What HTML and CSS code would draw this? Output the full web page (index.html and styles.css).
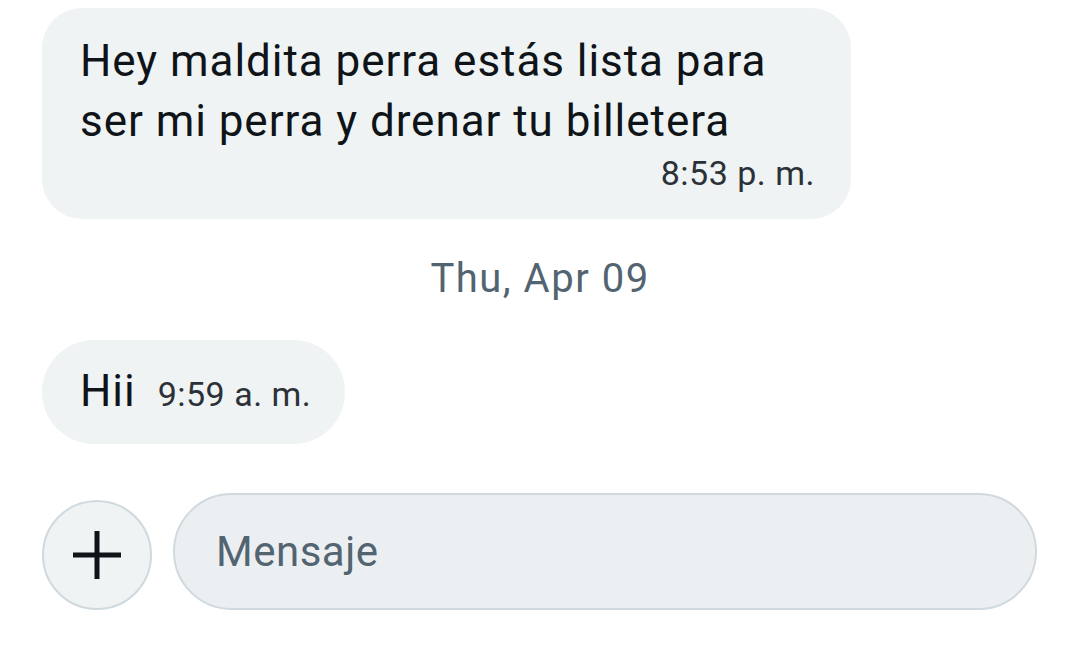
FILE: index.html
```html
<!DOCTYPE html>
<html lang="es">
<head>
<meta charset="utf-8">
<link rel="stylesheet" href="styles.css">
</head>
<body>
<div class="chat">
  <div class="bubble bubble-long">
    <div class="msg-text">Hey maldita perra estás lista para ser mi perra y drenar tu billetera</div>
    <div class="time time-right">8:53 p.&nbsp;m.</div>
  </div>
  <div class="date">Thu, Apr 09</div>
  <div class="bubble bubble-short">
    <span class="msg-text">Hii</span>
    <span class="time">9:59 a.&nbsp;m.</span>
  </div>
</div>
<div class="composer">
  <div class="plus-btn">
    <svg width="50" height="50" viewBox="0 0 50 50"><path d="M25 1v48M1 25h48" stroke="#0f1419" stroke-width="5" fill="none"/></svg>
  </div>
  <div class="input">Mensaje</div>
</div>
</body>
</html>
```
FILE: styles.css
```css
html, body { margin: 0; padding: 0; background: #fff; }
body {
  width: 1080px; height: 657px; overflow: hidden;
  font-family: Roboto, "Noto Sans", sans-serif;
  color: #0f1419;
}
.chat { padding: 8px 0 0 42px; display: flex; flex-direction: column; }
.bubble {
  background: #eff3f4;
  border-radius: 40px;
  box-sizing: border-box;
}
.bubble-long {
  width: 809px; height: 211px;
  padding: 23px 36px 0 38px;
}
.msg-text { font-size: 44px; line-height: 60px; letter-spacing: 0.95px; }
.time { font-size: 34px; color: #2b3136; letter-spacing: 0.5px; line-height: 40px; }
.time-right { text-align: right; margin-top: 2px; }
.date {
  width: 996px; text-align: center;
  font-size: 40px; color: #536471; letter-spacing: 1.5px;
  margin-top: 35px; line-height: 50px;
}
.bubble-short {
  margin-top: 36px;
  width: 303px; height: 104px;
  padding: 21px 0 0 38px;
  display: flex; align-items: baseline; gap: 22px;
  border-radius: 52px;
}
.composer {
  display: flex; align-items: center; gap: 21px;
  padding-left: 42px; margin-top: 48px;
}
.plus-btn {
  width: 110px; height: 110px; box-sizing: border-box;
  border: 2px solid #cfd9de; border-radius: 50%;
  background: #eff3f4;
  display: flex; align-items: center; justify-content: center;
  margin-top: 8px;
}
.input {
  width: 864px; height: 117px; box-sizing: border-box;
  border: 2px solid #cfd9de; border-radius: 60px;
  background: #eceff1;
  padding-left: 41px;
  display: flex; align-items: center;
  font-size: 42px; color: #536471; letter-spacing: 0.5px;
}
```
